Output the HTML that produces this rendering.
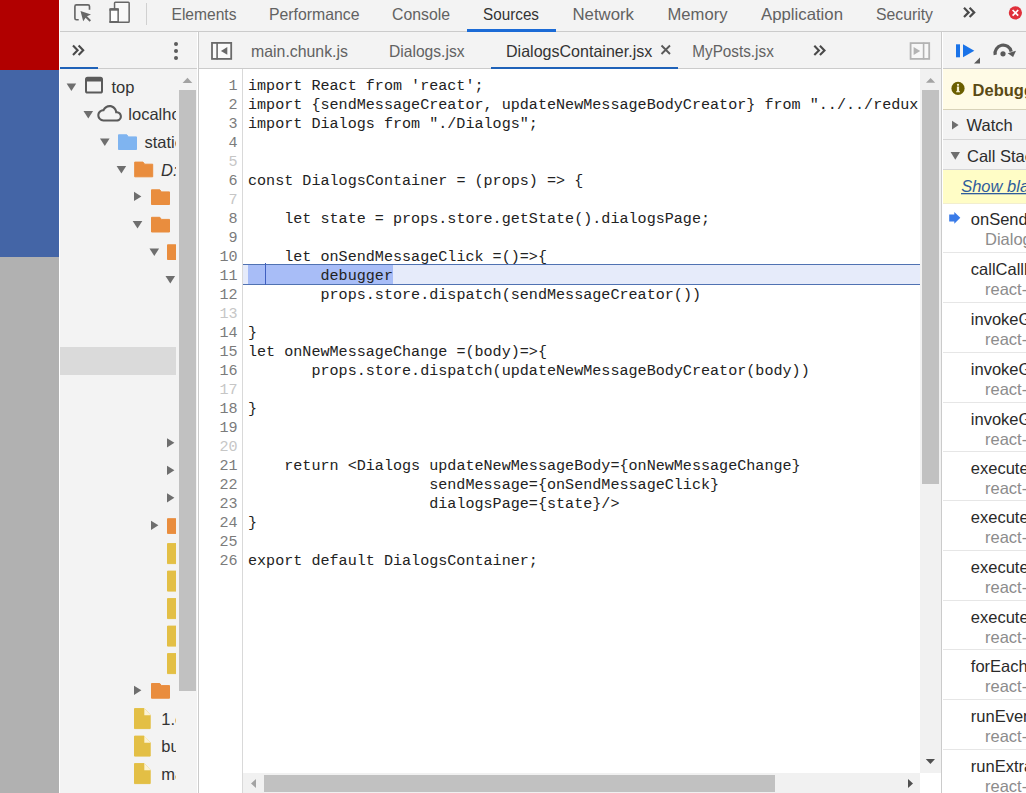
<!DOCTYPE html>
<html><head><meta charset="utf-8"><title>DevTools Sources</title>
<style>
html,body{margin:0;padding:0;width:1026px;height:793px;overflow:hidden;background:#fff;}
svg{display:block;font-family:"Liberation Sans", sans-serif;}
text{white-space:pre;}
</style></head>
<body>
<svg width="1026" height="793" viewBox="0 0 1026 793">
<rect x="0" y="0" width="59" height="70" fill="#b10000" />
<rect x="0" y="70" width="59" height="187" fill="#4465a6" />
<rect x="0" y="257" width="59" height="536" fill="#b1b1b1" />
<rect x="59" y="0" width="1" height="793" fill="#ffffff" />
<rect x="60" y="0" width="966" height="793" fill="#f3f3f3" />
<rect x="60" y="31" width="966" height="1" fill="#cbcbcb" />
<path d="M78.7,19.7 H76.4 Q74.9,19.7 74.9,18.2 V6.4 Q74.9,4.9 76.4,4.9 H88 Q89.5,4.9 89.5,6.4 V9.7" fill="none" stroke="#666" stroke-width="1.65" stroke-linecap="butt"/>
<polygon points="80.5,11.1 91,14.5 87,16.3 91,20.3 89.6,21.7 85.6,17.7 83.2,21.3" fill="#666"/>
<rect x="114.55" y="2.25" width="14.6" height="20" rx="0.8" fill="#f8f8f8" stroke="#666" stroke-width="1.5"/>
<rect x="110.15" y="9" width="8" height="13.25" rx="0.8" fill="#fdfdfd" stroke="#666" stroke-width="1.5"/>
<rect x="109.4" y="8.3" width="9.5" height="2.4" fill="#666" />
<rect x="109.4" y="21" width="9.5" height="2" fill="#666" />
<rect x="146" y="3" width="1" height="22" fill="#d0d0d0" />
<text x="171.5" y="20" font-size="16.5" fill="#626262" textLength="65" lengthAdjust="spacingAndGlyphs" >Elements</text>
<text x="269" y="20" font-size="16.5" fill="#626262" textLength="90.5" lengthAdjust="spacingAndGlyphs" >Performance</text>
<text x="392" y="20" font-size="16.5" fill="#626262" textLength="58" lengthAdjust="spacingAndGlyphs" >Console</text>
<text x="483" y="20" font-size="16.5" fill="#333" textLength="56" lengthAdjust="spacingAndGlyphs" >Sources</text>
<text x="572.5" y="20" font-size="16.5" fill="#626262" textLength="61.5" lengthAdjust="spacingAndGlyphs" >Network</text>
<text x="667.5" y="20" font-size="16.5" fill="#626262" textLength="60" lengthAdjust="spacingAndGlyphs" >Memory</text>
<text x="761" y="20" font-size="16.5" fill="#626262" textLength="82" lengthAdjust="spacingAndGlyphs" >Application</text>
<text x="876" y="20" font-size="16.5" fill="#626262" textLength="57" lengthAdjust="spacingAndGlyphs" >Security</text>
<rect x="467" y="29" width="89" height="3" fill="#1b6bd6" />
<path d="M964,7.8 L968.6,12.4 L964,17 M969.6,7.8 L974.2,12.4 L969.6,17" fill="none" stroke="#4a4a4a" stroke-width="2.2"/>
<circle cx="1015.4" cy="12.8" r="6.6" fill="#e0303a"/>
<path d="M1012.6,10 L1018.2,15.6 M1018.2,10 L1012.6,15.6" stroke="#fff" stroke-width="1.7"/>
<rect x="60" y="68" width="966" height="1" fill="#cbcbcb" />
<rect x="198" y="32" width="1" height="761" fill="#cbcbcb" />
<rect x="197" y="32" width="1" height="761" fill="#ffffff" />
<rect x="941" y="32" width="1" height="761" fill="#cbcbcb" />
<rect x="942" y="32" width="1" height="761" fill="#ffffff" />
<path d="M73,45.6 L77.6,50.3 L73,55 M78.6,45.6 L83.2,50.3 L78.6,55" fill="none" stroke="#4a4a4a" stroke-width="2.1"/>
<rect x="60" y="67" width="38" height="2" fill="#1f62b8" />
<circle cx="176" cy="43.9" r="2" fill="#5c5c5c"/>
<circle cx="176" cy="51" r="2" fill="#5c5c5c"/>
<circle cx="176" cy="58.1" r="2" fill="#5c5c5c"/>
<rect x="212" y="42.9" width="19.2" height="16" fill="#fbfbfb" stroke="#6a6a6a" stroke-width="1.8"/>
<rect x="216.3" y="42.5" width="1.6" height="17" fill="#6a6a6a" />
<polygon points="227.3,47.1 227.3,54.7 220.9,50.9" fill="#6a6a6a"/>
<text x="251" y="57" font-size="16.5" fill="#626262" textLength="97" lengthAdjust="spacingAndGlyphs" >main.chunk.js</text>
<text x="389" y="57" font-size="16.5" fill="#626262" textLength="75.5" lengthAdjust="spacingAndGlyphs" >Dialogs.jsx</text>
<text x="506" y="57" font-size="16.5" fill="#333" textLength="146.3" lengthAdjust="spacingAndGlyphs" >DialogsContainer.jsx</text>
<text x="692.3" y="57" font-size="16.5" fill="#626262" textLength="81.5" lengthAdjust="spacingAndGlyphs" >MyPosts.jsx</text>
<rect x="491" y="67" width="187" height="2" fill="#1f62b8" />
<path d="M661.5,45.5 L670,54 M670,45.5 L661.5,54" stroke="#5a5a5a" stroke-width="1.9"/>
<path d="M814.3,45.8 L818.9,50.4 L814.3,55 M819.9,45.8 L824.5,50.4 L819.9,55" fill="none" stroke="#4a4a4a" stroke-width="2.1"/>
<rect x="910.6" y="43.1" width="18.6" height="15.8" fill="#f7f7f7" stroke="#b3b3b3" stroke-width="1.8"/>
<rect x="922.8" y="42.5" width="1.6" height="17" fill="#b3b3b3" />
<polygon points="913.6,46.9 913.6,55.1 920.2,51" fill="#b3b3b3"/>
<rect x="956" y="44.3" width="4" height="13" fill="#1a73e8" />
<polygon points="963,44.2 974.3,50.7 963,57.2" fill="#1a73e8"/>
<polygon points="980,57.5 980,63.5 974,63.5" fill="#5a5a5a"/>
<path d="M995.2,54.9 A8.1,8.1 0 0 1 1011.2,51.6" fill="none" stroke="#5a5a5a" stroke-width="3.2"/>
<polygon points="1016,50.8 1013.1,57 1007.7,53.2" fill="#5a5a5a"/>
<circle cx="1003" cy="53.8" r="2.6" fill="#5a5a5a"/>
<polygon points="182.6,83 192.3,83 187.45,77.7" fill="#a3a3a3"/>
<rect x="179" y="90" width="17" height="601" fill="#c1c1c1" />
<rect x="60" y="347" width="116" height="28" fill="#dadada" />
<svg x="60" y="69" width="116" height="724" overflow="hidden"><g transform="translate(-60,-69)">
<polygon points="66.6,83.4 76.19999999999999,83.4 71.39999999999999,91.0" fill="#6e6e6e"/>
<rect x="86" y="77.8" width="16" height="14.8" rx="1.6" fill="none" stroke="#5a5a5a" stroke-width="2"/>
<rect x="86" y="78" width="16" height="3.5" fill="#5a5a5a" />
<text x="111.5" y="93" font-size="16.5" fill="#333" >top</text>
<polygon points="83.5,110.9 93.1,110.9 88.3,118.5" fill="#6e6e6e"/>
<path transform="translate(97.3,101) scale(1.025)" d="M19.35 10.04C18.67 6.59 15.64 4 12 4 9.11 4 6.6 5.64 5.35 8.04 2.34 8.36 0 10.91 0 14c0 3.31 2.69 6 6 6h13c2.76 0 5-2.240 5-5 0-2.64-2.05-4.78-4.650-4.96zM19 18H6c-2.21 0-4-1.79-4-4s1.79-4 4-4h.71C7.37 7.69 9.48 6 12 6c3.04 0 5.5 2.46 5.5 5.5v.5H19c1.66 0 3 1.34 3 3s-1.34 3-3 3z" fill="#5a5a5a"/>
<text x="128.3" y="120" font-size="16.5" fill="#333" >localhost:3000</text>
<polygon points="100,138.39999999999998 109.6,138.39999999999998 104.8,146.0" fill="#6e6e6e"/>
<path d="M118.5,134.79999999999998 h8.3 l1.6,2.1 h8.1 v12.6 h-18 z" fill="#7fb4f0" stroke="#7fb4f0" stroke-width="1" stroke-linejoin="round"/>
<text x="144.5" y="148" font-size="16.5" fill="#333" >static</text>
<polygon points="116.6,165.89999999999998 126.19999999999999,165.89999999999998 121.39999999999999,173.5" fill="#6e6e6e"/>
<path d="M134.7,162.1 h8.3 l1.6,2.1 h8.1 v12.6 h-18 z" fill="#e98d3e" stroke="#e98d3e" stroke-width="1" stroke-linejoin="round"/>
<text x="161" y="175.5" font-size="16.5" fill="#333" font-style="italic" >D:/projects</text>
<polygon points="134,191.79999999999998 141.4,196.39999999999998 134,201.0" fill="#6e6e6e"/>
<path d="M151.5,189.79999999999998 h8.3 l1.6,2.1 h8.1 v12.6 h-18 z" fill="#e98d3e" stroke="#e98d3e" stroke-width="1" stroke-linejoin="round"/>
<polygon points="132.7,220.89999999999998 142.29999999999998,220.89999999999998 137.5,228.5" fill="#6e6e6e"/>
<path d="M151.5,217.29999999999998 h8.3 l1.6,2.1 h8.1 v12.6 h-18 z" fill="#e98d3e" stroke="#e98d3e" stroke-width="1" stroke-linejoin="round"/>
<polygon points="149.5,248.39999999999998 159.1,248.39999999999998 154.3,256.0" fill="#6e6e6e"/>
<path d="M167.5,244.79999999999998 h8.3 l1.6,2.1 h8.1 v12.6 h-18 z" fill="#e98d3e" stroke="#e98d3e" stroke-width="1" stroke-linejoin="round"/>
<polygon points="165.5,275.9 175.1,275.9 170.3,283.5" fill="#6e6e6e"/>
<polygon points="167,438.20000000000005 174.4,442.8 167,447.40000000000003" fill="#6e6e6e"/>
<polygon points="167,465.70000000000005 174.4,470.3 167,474.90000000000003" fill="#6e6e6e"/>
<polygon points="167,493.20000000000005 174.4,497.8 167,502.40000000000003" fill="#6e6e6e"/>
<polygon points="151,520.7 158.4,525.3000000000001 151,529.9" fill="#6e6e6e"/>
<path d="M167.5,518.7 h8.3 l1.6,2.1 h8.1 v12.6 h-18 z" fill="#e98d3e" stroke="#e98d3e" stroke-width="1" stroke-linejoin="round"/>
<path d="M167.5,543.6 h9.6 l6.1,6.4 v13.6 h-15.7 z" fill="#e3bf45" stroke="#e3bf45" stroke-width="1" stroke-linejoin="round"/>
<path d="M177.3,543.3000000000001 v6.9 h6.6 z" fill="#fbf3d6"/>
<path d="M167.5,571.1 h9.6 l6.1,6.4 v13.6 h-15.7 z" fill="#e3bf45" stroke="#e3bf45" stroke-width="1" stroke-linejoin="round"/>
<path d="M177.3,570.8000000000001 v6.9 h6.6 z" fill="#fbf3d6"/>
<path d="M167.5,598.6 h9.6 l6.1,6.4 v13.6 h-15.7 z" fill="#e3bf45" stroke="#e3bf45" stroke-width="1" stroke-linejoin="round"/>
<path d="M177.3,598.3000000000001 v6.9 h6.6 z" fill="#fbf3d6"/>
<path d="M167.5,626.1 h9.6 l6.1,6.4 v13.6 h-15.7 z" fill="#e3bf45" stroke="#e3bf45" stroke-width="1" stroke-linejoin="round"/>
<path d="M177.3,625.8000000000001 v6.9 h6.6 z" fill="#fbf3d6"/>
<path d="M167.5,653.6 h9.6 l6.1,6.4 v13.6 h-15.7 z" fill="#e3bf45" stroke="#e3bf45" stroke-width="1" stroke-linejoin="round"/>
<path d="M177.3,653.3000000000001 v6.9 h6.6 z" fill="#fbf3d6"/>
<polygon points="134,685.7 141.4,690.3000000000001 134,694.9" fill="#6e6e6e"/>
<path d="M151.5,683.5 h8.3 l1.6,2.1 h8.1 v12.6 h-18 z" fill="#e98d3e" stroke="#e98d3e" stroke-width="1" stroke-linejoin="round"/>
<path d="M134.5,708.6 h9.6 l6.1,6.4 v13.6 h-15.7 z" fill="#e3bf45" stroke="#e3bf45" stroke-width="1" stroke-linejoin="round"/>
<path d="M144.3,708.3000000000001 v6.9 h6.6 z" fill="#fbf3d6"/>
<text x="161.3" y="724.6" font-size="16.5" fill="#333" >1.chunk.js</text>
<path d="M134.5,736.1 h9.6 l6.1,6.4 v13.6 h-15.7 z" fill="#e3bf45" stroke="#e3bf45" stroke-width="1" stroke-linejoin="round"/>
<path d="M144.3,735.8000000000001 v6.9 h6.6 z" fill="#fbf3d6"/>
<text x="161.3" y="752.1" font-size="16.5" fill="#333" >bundle.js</text>
<path d="M134.5,763.6 h9.6 l6.1,6.4 v13.6 h-15.7 z" fill="#e3bf45" stroke="#e3bf45" stroke-width="1" stroke-linejoin="round"/>
<path d="M144.3,763.3000000000001 v6.9 h6.6 z" fill="#fbf3d6"/>
<text x="161.3" y="779.6" font-size="16.5" fill="#333" >main.chunk.js</text>
</g></svg>
<rect x="199" y="69" width="742" height="724" fill="#ffffff" />
<rect x="242" y="69" width="1" height="724" fill="#d9d9d9" />
<rect x="243" y="264" width="677" height="21" fill="#e6ebfa" />
<rect x="248" y="265" width="145" height="19" fill="#a8bdf7" />
<rect x="243" y="264" width="677" height="1" fill="#5072b2" />
<rect x="243" y="284" width="677" height="1" fill="#5072b2" />
<rect x="265" y="263" width="1" height="22" fill="#3f5fc0" />
<svg x="243" y="69" width="677" height="704" overflow="hidden"><g transform="translate(-243,-69)">
<text x="248" y="90" font-size="15.1" fill="#222" font-family='"Liberation Mono", monospace' textLength="235.56" lengthAdjust="spacingAndGlyphs" >import React from &#x27;react&#x27;;</text>
<text x="248" y="109" font-size="15.1" fill="#222" font-family='"Liberation Mono", monospace' textLength="670.44" lengthAdjust="spacingAndGlyphs" >import {sendMessageCreator, updateNewMessageBodyCreator} from &quot;../../redux</text>
<text x="248" y="128" font-size="15.1" fill="#222" font-family='"Liberation Mono", monospace' textLength="289.92" lengthAdjust="spacingAndGlyphs" >import Dialogs from &quot;./Dialogs&quot;;</text>
<text x="248" y="185" font-size="15.1" fill="#222" font-family='"Liberation Mono", monospace' textLength="335.22" lengthAdjust="spacingAndGlyphs" >const DialogsContainer = (props) =&gt; {</text>
<text x="248" y="223" font-size="15.1" fill="#222" font-family='"Liberation Mono", monospace' textLength="462.06" lengthAdjust="spacingAndGlyphs" >    let state = props.store.getState().dialogsPage;</text>
<text x="248" y="261" font-size="15.1" fill="#222" font-family='"Liberation Mono", monospace' textLength="298.98" lengthAdjust="spacingAndGlyphs" >    let onSendMessageClick =()=&gt;{</text>
<text x="248" y="280" font-size="15.1" fill="#222" font-family='"Liberation Mono", monospace' textLength="144.96" lengthAdjust="spacingAndGlyphs" >        debugger</text>
<text x="248" y="299" font-size="15.1" fill="#222" font-family='"Liberation Mono", monospace' textLength="453.0" lengthAdjust="spacingAndGlyphs" >        props.store.dispatch(sendMessageCreator())</text>
<text x="248" y="337" font-size="15.1" fill="#222" font-family='"Liberation Mono", monospace' textLength="9.06" lengthAdjust="spacingAndGlyphs" >}</text>
<text x="248" y="356" font-size="15.1" fill="#222" font-family='"Liberation Mono", monospace' textLength="298.98" lengthAdjust="spacingAndGlyphs" >let onNewMessageChange =(body)=&gt;{</text>
<text x="248" y="375" font-size="15.1" fill="#222" font-family='"Liberation Mono", monospace' textLength="561.72" lengthAdjust="spacingAndGlyphs" >       props.store.dispatch(updateNewMessageBodyCreator(body))</text>
<text x="248" y="413" font-size="15.1" fill="#222" font-family='"Liberation Mono", monospace' textLength="9.06" lengthAdjust="spacingAndGlyphs" >}</text>
<text x="248" y="470" font-size="15.1" fill="#222" font-family='"Liberation Mono", monospace' textLength="552.66" lengthAdjust="spacingAndGlyphs" >    return &lt;Dialogs updateNewMessageBody={onNewMessageChange}</text>
<text x="248" y="489" font-size="15.1" fill="#222" font-family='"Liberation Mono", monospace' textLength="471.12" lengthAdjust="spacingAndGlyphs" >                    sendMessage={onSendMessageClick}</text>
<text x="248" y="508" font-size="15.1" fill="#222" font-family='"Liberation Mono", monospace' textLength="371.46" lengthAdjust="spacingAndGlyphs" >                    dialogsPage={state}/&gt;</text>
<text x="248" y="527" font-size="15.1" fill="#222" font-family='"Liberation Mono", monospace' textLength="9.06" lengthAdjust="spacingAndGlyphs" >}</text>
<text x="248" y="565" font-size="15.1" fill="#222" font-family='"Liberation Mono", monospace' textLength="289.92" lengthAdjust="spacingAndGlyphs" >export default DialogsContainer;</text>
</g></svg>
<text x="228.44" y="90" font-size="15.1" fill="#7b7b7b" font-family='"Liberation Mono", monospace' textLength="9.06" lengthAdjust="spacingAndGlyphs" >1</text>
<text x="228.44" y="109" font-size="15.1" fill="#7b7b7b" font-family='"Liberation Mono", monospace' textLength="9.06" lengthAdjust="spacingAndGlyphs" >2</text>
<text x="228.44" y="128" font-size="15.1" fill="#7b7b7b" font-family='"Liberation Mono", monospace' textLength="9.06" lengthAdjust="spacingAndGlyphs" >3</text>
<text x="228.44" y="147" font-size="15.1" fill="#7b7b7b" font-family='"Liberation Mono", monospace' textLength="9.06" lengthAdjust="spacingAndGlyphs" >4</text>
<text x="228.44" y="166" font-size="15.1" fill="#c6c6c6" font-family='"Liberation Mono", monospace' textLength="9.06" lengthAdjust="spacingAndGlyphs" >5</text>
<text x="228.44" y="185" font-size="15.1" fill="#7b7b7b" font-family='"Liberation Mono", monospace' textLength="9.06" lengthAdjust="spacingAndGlyphs" >6</text>
<text x="228.44" y="204" font-size="15.1" fill="#c6c6c6" font-family='"Liberation Mono", monospace' textLength="9.06" lengthAdjust="spacingAndGlyphs" >7</text>
<text x="228.44" y="223" font-size="15.1" fill="#7b7b7b" font-family='"Liberation Mono", monospace' textLength="9.06" lengthAdjust="spacingAndGlyphs" >8</text>
<text x="228.44" y="242" font-size="15.1" fill="#7b7b7b" font-family='"Liberation Mono", monospace' textLength="9.06" lengthAdjust="spacingAndGlyphs" >9</text>
<text x="219.38" y="261" font-size="15.1" fill="#7b7b7b" font-family='"Liberation Mono", monospace' textLength="18.12" lengthAdjust="spacingAndGlyphs" >10</text>
<text x="219.38" y="280" font-size="15.1" fill="#7b7b7b" font-family='"Liberation Mono", monospace' textLength="18.12" lengthAdjust="spacingAndGlyphs" >11</text>
<text x="219.38" y="299" font-size="15.1" fill="#7b7b7b" font-family='"Liberation Mono", monospace' textLength="18.12" lengthAdjust="spacingAndGlyphs" >12</text>
<text x="219.38" y="318" font-size="15.1" fill="#c6c6c6" font-family='"Liberation Mono", monospace' textLength="18.12" lengthAdjust="spacingAndGlyphs" >13</text>
<text x="219.38" y="337" font-size="15.1" fill="#7b7b7b" font-family='"Liberation Mono", monospace' textLength="18.12" lengthAdjust="spacingAndGlyphs" >14</text>
<text x="219.38" y="356" font-size="15.1" fill="#7b7b7b" font-family='"Liberation Mono", monospace' textLength="18.12" lengthAdjust="spacingAndGlyphs" >15</text>
<text x="219.38" y="375" font-size="15.1" fill="#7b7b7b" font-family='"Liberation Mono", monospace' textLength="18.12" lengthAdjust="spacingAndGlyphs" >16</text>
<text x="219.38" y="394" font-size="15.1" fill="#c6c6c6" font-family='"Liberation Mono", monospace' textLength="18.12" lengthAdjust="spacingAndGlyphs" >17</text>
<text x="219.38" y="413" font-size="15.1" fill="#7b7b7b" font-family='"Liberation Mono", monospace' textLength="18.12" lengthAdjust="spacingAndGlyphs" >18</text>
<text x="219.38" y="432" font-size="15.1" fill="#7b7b7b" font-family='"Liberation Mono", monospace' textLength="18.12" lengthAdjust="spacingAndGlyphs" >19</text>
<text x="219.38" y="451" font-size="15.1" fill="#c6c6c6" font-family='"Liberation Mono", monospace' textLength="18.12" lengthAdjust="spacingAndGlyphs" >20</text>
<text x="219.38" y="470" font-size="15.1" fill="#7b7b7b" font-family='"Liberation Mono", monospace' textLength="18.12" lengthAdjust="spacingAndGlyphs" >21</text>
<text x="219.38" y="489" font-size="15.1" fill="#7b7b7b" font-family='"Liberation Mono", monospace' textLength="18.12" lengthAdjust="spacingAndGlyphs" >22</text>
<text x="219.38" y="508" font-size="15.1" fill="#7b7b7b" font-family='"Liberation Mono", monospace' textLength="18.12" lengthAdjust="spacingAndGlyphs" >23</text>
<text x="219.38" y="527" font-size="15.1" fill="#7b7b7b" font-family='"Liberation Mono", monospace' textLength="18.12" lengthAdjust="spacingAndGlyphs" >24</text>
<text x="219.38" y="546" font-size="15.1" fill="#7b7b7b" font-family='"Liberation Mono", monospace' textLength="18.12" lengthAdjust="spacingAndGlyphs" >25</text>
<text x="219.38" y="565" font-size="15.1" fill="#7b7b7b" font-family='"Liberation Mono", monospace' textLength="18.12" lengthAdjust="spacingAndGlyphs" >26</text>
<rect x="920" y="69" width="21" height="704" fill="#f1f1f1" />
<polygon points="926,82.8 935.2,82.8 930.6,78" fill="#a3a3a3"/>
<rect x="922" y="90" width="17" height="394" fill="#c1c1c1" />
<polygon points="925.8,759 935,759 930.4,764" fill="#505050"/>
<rect x="243" y="773" width="677" height="20" fill="#f1f1f1" />
<polygon points="256,779 256,788 251,783.5" fill="#a3a3a3"/>
<rect x="264" y="775" width="511" height="17" fill="#c1c1c1" />
<polygon points="908,779 908,788 913,783.5" fill="#505050"/>
<rect x="920" y="773" width="21" height="20" fill="#ffffff" />
<rect x="943" y="69" width="83" height="724" fill="#ffffff" />
<rect x="943" y="69" width="83" height="40" fill="#fffbe6" />
<rect x="943" y="109" width="83" height="1" fill="#d8d2b8" />
<circle cx="958" cy="88.4" r="6.6" fill="#6a5e00"/>
<path d="M956.9,86.6 h2.2 v4.6 h0.9 v1.1 h-3.9 v-1.1 h0.8 z" fill="#f6f0d0"/>
<circle cx="958" cy="84.8" r="1.15" fill="#f6f0d0"/>
<text x="972.6" y="95.8" font-size="16.5" fill="#5a4a14" font-weight="bold" >Debugger paused</text>
<rect x="943" y="110" width="83" height="29" fill="#f3f3f3" />
<rect x="943" y="139" width="83" height="1" fill="#d6d6d6" />
<polygon points="952,120.7 958.6,125.1 952,129.5" fill="#6e6e6e"/>
<text x="966.5" y="131" font-size="16.5" fill="#2c2c2c" >Watch</text>
<rect x="943" y="140" width="83" height="29" fill="#f3f3f3" />
<rect x="943" y="169" width="83" height="1" fill="#d6d6d6" />
<polygon points="950.6,152 960,152 955.3,159.8" fill="#6e6e6e"/>
<text x="967" y="161.6" font-size="16.5" fill="#2c2c2c" >Call Stack</text>
<rect x="943" y="170" width="83" height="33" fill="#fffdc6" />
<rect x="943" y="203" width="83" height="1" fill="#f2eecf" />
<text x="961.2" y="192" font-size="16.5" fill="#2f5c9c" font-style="italic" >Show blackboxed frames</text>
<rect x="961" y="193" width="70" height="1.3" fill="#2f5c9c" />
<text x="970.8" y="225" font-size="16.5" fill="#2a2a2a" >onSendMessageClick</text>
<text x="985" y="245" font-size="16.5" fill="#8c8c8c" >DialogsContainer.jsx:11</text>
<rect x="943" y="252" width="83" height="1" fill="#e6e6e6" />
<text x="970.8" y="274.8" font-size="16.5" fill="#2a2a2a" >callCallback</text>
<text x="985" y="294.6" font-size="16.5" fill="#8c8c8c" >react-dom.development.js:188</text>
<rect x="943" y="302" width="83" height="1" fill="#e6e6e6" />
<text x="970.8" y="324.8" font-size="16.5" fill="#2a2a2a" >invokeGuardedCallbackDev</text>
<text x="985" y="344.6" font-size="16.5" fill="#8c8c8c" >react-dom.development.js:237</text>
<rect x="943" y="352" width="83" height="1" fill="#e6e6e6" />
<text x="970.8" y="374.8" font-size="16.5" fill="#2a2a2a" >invokeGuardedCallback</text>
<text x="985" y="394.6" font-size="16.5" fill="#8c8c8c" >react-dom.development.js:292</text>
<rect x="943" y="402" width="83" height="1" fill="#e6e6e6" />
<text x="970.8" y="424.8" font-size="16.5" fill="#2a2a2a" >invokeGuardedCallbackAndCatchFirstError</text>
<text x="985" y="444.6" font-size="16.5" fill="#8c8c8c" >react-dom.development.js:306</text>
<rect x="943" y="451" width="83" height="1" fill="#e6e6e6" />
<text x="970.8" y="473.8" font-size="16.5" fill="#2a2a2a" >executeDispatch</text>
<text x="985" y="493.6" font-size="16.5" fill="#8c8c8c" >react-dom.development.js:389</text>
<rect x="943" y="500" width="83" height="1" fill="#e6e6e6" />
<text x="970.8" y="522.8" font-size="16.5" fill="#2a2a2a" >executeDispatchesInOrder</text>
<text x="985" y="542.6" font-size="16.5" fill="#8c8c8c" >react-dom.development.js:414</text>
<rect x="943" y="550" width="83" height="1" fill="#e6e6e6" />
<text x="970.8" y="572.8" font-size="16.5" fill="#2a2a2a" >executeDispatchesAndRelease</text>
<text x="985" y="592.6" font-size="16.5" fill="#8c8c8c" >react-dom.development.js:3278</text>
<rect x="943" y="600" width="83" height="1" fill="#e6e6e6" />
<text x="970.8" y="622.8" font-size="16.5" fill="#2a2a2a" >executeDispatchesAndReleaseTopLevel</text>
<text x="985" y="642.6" font-size="16.5" fill="#8c8c8c" >react-dom.development.js:3287</text>
<rect x="943" y="649" width="83" height="1" fill="#e6e6e6" />
<text x="970.8" y="671.8" font-size="16.5" fill="#2a2a2a" >forEachAccumulated</text>
<text x="985" y="691.6" font-size="16.5" fill="#8c8c8c" >react-dom.development.js:3259</text>
<rect x="943" y="699" width="83" height="1" fill="#e6e6e6" />
<text x="970.8" y="721.8" font-size="16.5" fill="#2a2a2a" >runEventsInBatch</text>
<text x="985" y="741.6" font-size="16.5" fill="#8c8c8c" >react-dom.development.js:3304</text>
<rect x="943" y="749" width="83" height="1" fill="#e6e6e6" />
<text x="970.8" y="771.8" font-size="16.5" fill="#2a2a2a" >runExtractedPluginsAndEventsInBatch</text>
<text x="985" y="791.6" font-size="16.5" fill="#8c8c8c" >react-dom.development.js:3314</text>
<polygon points="949.2,214.4 954.3,214.4 954.3,212 960.3,217.8 954.3,223.8 954.3,221.6 949.2,221.6" fill="#3a7be8"/>
</svg>
</body></html>
